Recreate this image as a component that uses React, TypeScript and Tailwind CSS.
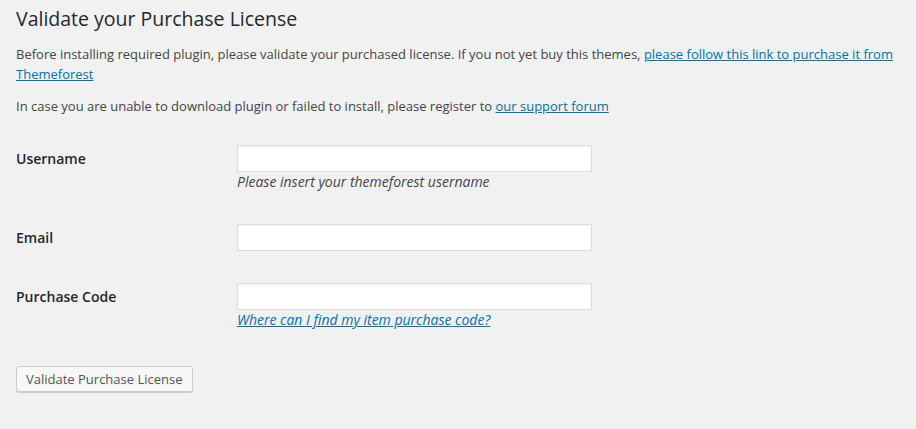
import React from "react";

function Row({
  label,
  children,
  className = "",
}: {
  label: string;
  children?: React.ReactNode;
  className?: string;
}) {
  return (
    <div className={`flex items-start ${className}`}>
      <div className="w-[221px] shrink-0 pt-[5px] text-[14px] font-semibold leading-[18px] text-[#23282d]">
        {label}
      </div>
      <div className="flex flex-col">
        <input
          type="text"
          className="h-[27px] w-[355px] border border-[#ddd] bg-white px-2 text-[14px] shadow-[inset_0_1px_2px_rgba(0,0,0,0.07)] outline-none"
        />
        {children}
      </div>
    </div>
  );
}

export default function App() {
  return (
    <div
      className="min-h-[429px] w-full bg-[#f1f1f1] pl-[16px] pr-[20px] text-[13px] text-[#444]"
      style={{ fontFamily: '"Open Sans", "Liberation Sans", sans-serif' }}
    >
      <h1 className="pt-[6px] text-[19.5px] font-normal leading-[26px] text-[#23282d]">
        Validate your Purchase License
      </h1>
      <p className="mt-[13px] leading-[19.5px]">
        Before installing required plugin, please validate your purchased license. If you not yet buy this themes,{" "}
        <a href="#" className="text-[#0073aa] underline">
          please follow this link to purchase it from Themeforest
        </a>
      </p>
      <p className="mt-[13px] leading-[19.5px]">
        In case you are unable to download plugin or failed to install, please register to{" "}
        <a href="#" className="text-[#0073aa] underline">
          our support forum
        </a>
      </p>

      <div className="mt-[28px] flex flex-col">
        <Row label="Username">
          <span className="text-[14px] italic leading-[20px] text-[#444]">
            Please insert your themeforest username
          </span>
        </Row>
        <Row label="Email" className="mt-[32px]" />
        <Row label="Purchase Code" className="mt-[32px]">
          <a href="#" className="text-[14px] italic leading-[20px] text-[#0073aa] underline">
            Where can I find my item purchase code?
          </a>
        </Row>
      </div>

      <button
        type="button"
        className="mt-[36px] h-[26px] rounded-[3px] border border-[#ccc] bg-[#f7f7f7] px-[9px] text-[13px] leading-[24px] text-[#555] shadow-[0_1px_0_#ccc]"
      >
        Validate Purchase License
      </button>
    </div>
  );
}
